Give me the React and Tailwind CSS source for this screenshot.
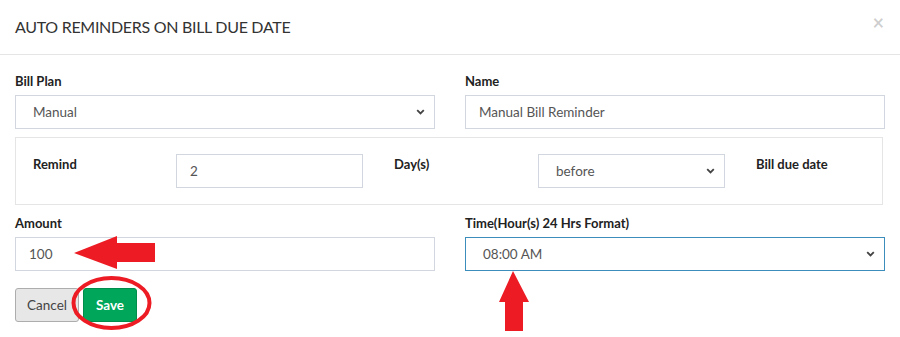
import React from 'react';

const FONT = { fontFamily: 'Lato, "Noto Sans", sans-serif' };

const Chevron = () => (
  <svg width="9" height="6" viewBox="0 0 9 6" className="absolute right-[9px] top-1/2 -translate-y-1/2">
    <path d="M1.2 1.2 L4.5 4.5 L7.8 1.2" stroke="#444" strokeWidth="1.8" fill="none" />
  </svg>
);

const Select = ({ value, blue = false, className = '' }) => (
  <div
    className={`relative h-[34px] border ${blue ? 'border-[#3c8dbc]' : 'border-[#d2d6de]'} bg-white flex items-center pl-[17px] text-[13.5px] text-[#555] ${className}`}
  >
    {value}
    <Chevron />
  </div>
);

const Input = ({ value, className = '' }) => (
  <div className={`h-[34px] border border-[#d2d6de] bg-white flex items-center pl-[13px] text-[13.5px] text-[#555] ${className}`}>
    {value}
  </div>
);

const Label = ({ children, className = '' }) => (
  <div className={`text-[13px] font-bold leading-[17px] text-[#222] ${className}`}>{children}</div>
);

export default function App() {
  return (
    <div className="relative w-[900px] h-[337px] bg-white overflow-hidden" style={FONT}>
      {/* header */}
      <div className="h-[55px] px-[15px] flex items-center justify-between border-b border-[#e5e5e5]">
        <h4 className="text-[16px] text-[#333] tracking-[-0.3px]">AUTO REMINDERS ON BILL DUE DATE</h4>
        <span className="text-[20px] font-bold text-black/20 leading-none -mt-[10px] mr-[1px]">×</span>
      </div>

      {/* body */}
      <div className="px-[15px] pt-[18px]">
        <div className="grid grid-cols-2 gap-x-[30px]">
          <div>
            <Label className="mb-[5px]">Bill Plan</Label>
            <Select value="Manual" />
          </div>
          <div>
            <Label className="mb-[5px]">Name</Label>
            <Input value="Manual Bill Reminder" />
          </div>
        </div>

        <div className="mt-[8px] mr-[2px] border border-[#e5e5e5] flex items-start pl-[17px] pt-[16px] pb-[16px]">
          <Label className="w-[143px] pt-[2px]">Remind</Label>
          <Input value="2" className="w-[187px]" />
          <Label className="ml-[31px] w-[144px] pt-[2px]">Day(s)</Label>
          <Select value="before" className="w-[187px]" />
          <Label className="ml-[31px] pt-[2px]">Bill due date</Label>
        </div>

        <div className="grid grid-cols-2 gap-x-[30px] mt-[10px]">
          <div>
            <Label className="mb-[5px]">Amount</Label>
            <Input value="100" />
          </div>
          <div>
            <Label className="mb-[5px]">Time(Hour(s) 24 Hrs Format)</Label>
            <Select value="08:00 AM" blue />
          </div>
        </div>

        <div className="mt-[17px] flex gap-[4px]">
          <button className="h-[34px] w-[64px] rounded-[3px] border border-[#adadad] bg-[#e7e7e7] text-[13.5px] text-[#444]">
            Cancel
          </button>
          <button className="h-[34px] w-[54px] rounded-[3px] border border-[#008d4c] bg-[#00a65a] text-[13.5px] font-bold text-white">
            Save
          </button>
        </div>
      </div>

      {/* annotations */}
      <svg className="absolute left-[70px] top-[232px]" width="90" height="40" viewBox="70 232 90 40">
        <polygon points="74,253 117,236 117,243 155,243 155,262 117,262 117,269" fill="#ed1c24" />
      </svg>
      <svg className="absolute left-[495px] top-[268px]" width="40" height="66" viewBox="495 268 40 66">
        <polygon points="513,271 529,302 523,302 523,331 505,331 505,302 499,302" fill="#ed1c24" />
      </svg>
      <svg className="absolute left-[68px] top-[274px]" width="88" height="58" viewBox="68 274 88 58">
        <ellipse cx="111.5" cy="303" rx="38" ry="25" fill="none" stroke="#ed1c24" strokeWidth="4" />
      </svg>
    </div>
  );
}
